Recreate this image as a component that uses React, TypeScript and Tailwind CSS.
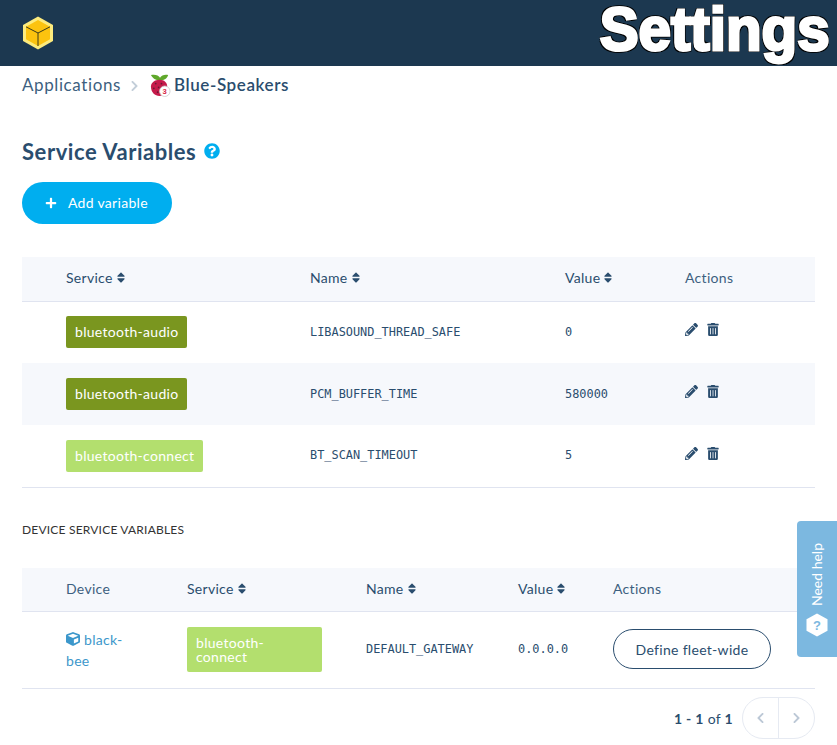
import { FaPencilAlt, FaTrashAlt, FaSort, FaCube, FaQuestionCircle, FaPlus, FaChevronLeft, FaChevronRight } from 'react-icons/fa';

const vars = [
  { service: 'bluetooth-audio', color: 'bg-[#7a961f]', name: 'LIBASOUND_THREAD_SAFE', value: '0' },
  { service: 'bluetooth-audio', color: 'bg-[#7a961f]', name: 'PCM_BUFFER_TIME', value: '580000' },
  { service: 'bluetooth-connect', color: 'bg-[#b3df6e]', name: 'BT_SCAN_TIMEOUT', value: '5' },
];

function Logo() {
  return (
    <svg width="32" height="34" viewBox="0 0 32 34">
      <path d="M16 0.5 L31 9 V25 L16 33.5 L1 25 V9 Z" fill="#fdeb7d" />
      <path d="M16 4 L28 10.8 V23.2 L16 30 L4 23.2 V10.8 Z" fill="#fcc30f" />
      <path d="M4 10.8 L16 17 L28 10.8 M16 17 V30" fill="none" stroke="#3b3a1a" strokeWidth="1" />
    </svg>
  );
}

function Raspberry() {
  return (
    <svg width="21" height="23" viewBox="0 0 22 24">
      <path d="M10 7 C6 6 3 5 1 1 C5 0 9 1 10.5 4 C12 1 16 0 19 1 C18 5 15 6 11 7 Z" fill="#5fa82b" />
      <path d="M10 6 C15 6 18 9 18 13 C18 19 14 23 10 23 C5 23 1 19 1 13 C1 9 5 6 10 6 Z" fill="#c51a4a" />
      <g fill="#2a1a25" opacity="0.6">
        <circle cx="6" cy="10" r="0.9" />
        <circle cx="12" cy="10" r="0.9" />
        <circle cx="9" cy="14" r="0.9" />
        <circle cx="4" cy="15" r="0.9" />
        <circle cx="8" cy="19" r="0.9" />
      </g>
      <circle cx="15.5" cy="18" r="5.5" fill="#fff" stroke="#c9c9c9" strokeWidth="0.8" />
      <text x="15.5" y="21" textAnchor="middle" fontSize="8" fontWeight="700" fill="#d81f45" fontFamily="'Liberation Sans', sans-serif">3</text>
    </svg>
  );
}

function SortHead({ label }: { label: string }) {
  return (
    <span className="flex items-center gap-[3px]">
      {label}
      <FaSort className="w-[10px] h-[13px] text-[#2a4d6e]" />
    </span>
  );
}

export default function App() {
  return (
    <div className="relative w-[837px] h-[745px] overflow-hidden bg-white text-[#2a4d6e] tracking-[0.3px] font-['Lato','Noto_Sans',sans-serif]">
      {/* Header */}
      <header className="h-[66px] bg-[#1c3850] flex items-center justify-between pl-[22px] pr-[7px] overflow-hidden">
        <Logo />
        <span className="origin-right scale-x-[0.94] mb-[8px] font-['Liberation_Sans',sans-serif] font-bold text-[62px] leading-[58px] tracking-[0px] text-white whitespace-nowrap [-webkit-text-stroke:3px_#fff] [text-shadow:2px_0_0_#000,-2px_0_0_#000,0_2px_0_#000,0_-2px_0_#000,2px_2px_0_#000,-2px_-2px_0_#000,2px_-2px_0_#000,-2px_2px_0_#000]">
          Settings
        </span>
      </header>

      <main className="px-[22px]">
        {/* Breadcrumb */}
        <div className="h-[38px] flex items-center text-[17px] tracking-[0.6px]">
          <span className="text-[#3d5f7f]">Applications</span>
          <FaChevronRight className="w-[9px] h-[12px] ml-[9px] mr-[11px] mt-[2px] text-[#c3ced9]" />
          <Raspberry />
          <span className="ml-[3px] font-semibold">Blue-Speakers</span>
        </div>

        {/* Title */}
        <div className="mt-[33px] h-[28px] flex items-center gap-[8px]">
          <h1 className="text-[22px] font-bold tracking-[0.55px]">Service Variables</h1>
          <FaQuestionCircle className="w-[16px] h-[16px] text-[#00aeef]" />
        </div>

        <button className="mt-[17px] w-[150px] h-[42px] pb-[1px] rounded-full bg-[#00aeef] text-white text-[14px] flex items-center pl-[23px] gap-[11px]">
          <FaPlus className="w-[12px] h-[12px]" />
          Add variable
        </button>

        {/* Service variables */}
        <table className="mt-[33px] w-[793px] table-fixed border-collapse text-[14px]">
          <colgroup>
            <col className="w-[44px]" />
            <col className="w-[244px]" />
            <col className="w-[255px]" />
            <col className="w-[120px]" />
            <col />
          </colgroup>
          <thead>
            <tr className="h-[44px] bg-[#f6f8fc] border-b border-[#e0e4f0] text-left">
              <th />
              <th className="font-normal pb-[2px]"><SortHead label="Service" /></th>
              <th className="font-normal pb-[2px]"><SortHead label="Name" /></th>
              <th className="font-normal pb-[2px]"><SortHead label="Value" /></th>
              <th className="font-normal pb-[2px] text-[#3d5f7f]">Actions</th>
            </tr>
          </thead>
          <tbody>
            {vars.map((v, i) => (
              <tr key={v.name} className={`h-[62px] ${i === 1 ? 'bg-[#f6f8fc]' : ''} ${i === 2 ? 'border-b border-[#e0e4f0]' : ''}`}>
                <td />
                <td>
                  <span className={`inline-flex items-center h-[32px] pb-[1px] px-[9px] rounded-[2px] text-white ${v.color}`}>{v.service}</span>
                </td>
                <td className="pt-[1px] tracking-normal font-['DejaVu_Sans_Mono',monospace] text-[11.9px]">{v.name}</td>
                <td className="pt-[1px] tracking-normal font-['DejaVu_Sans_Mono',monospace] text-[11.9px]">{v.value}</td>
                <td>
                  <div className="flex items-center gap-[9px] mb-[5px]">
                    <FaPencilAlt className="w-[13px] h-[13px]" />
                    <FaTrashAlt className="w-[12px] h-[13px]" />
                  </div>
                </td>
              </tr>
            ))}
          </tbody>
        </table>

        <h2 className="mt-[34px] h-[16px] flex items-center text-[12px] text-[#333] tracking-[0.2px]">DEVICE SERVICE VARIABLES</h2>

        {/* Device service variables */}
        <table className="mt-[30px] w-[793px] table-fixed border-collapse text-[14px]">
          <colgroup>
            <col className="w-[44px]" />
            <col className="w-[121px]" />
            <col className="w-[179px]" />
            <col className="w-[152px]" />
            <col className="w-[95px]" />
            <col />
          </colgroup>
          <thead>
            <tr className="h-[44px] bg-[#f6f8fc] border-b border-[#e0e4f0] text-left">
              <th />
              <th className="font-normal pb-[2px] text-[#3d5f7f]">Device</th>
              <th className="font-normal pb-[2px]"><SortHead label="Service" /></th>
              <th className="font-normal pb-[2px]"><SortHead label="Name" /></th>
              <th className="font-normal pb-[2px]"><SortHead label="Value" /></th>
              <th className="font-normal pb-[2px] text-[#3d5f7f]">Actions</th>
            </tr>
          </thead>
          <tbody>
            <tr className="h-[77px] border-b border-[#e0e4f0]">
              <td />
              <td className="pr-[52px] pb-[1px] text-[#3c97cb] leading-[21px]">
                <FaCube className="inline w-[14px] h-[14px] mr-[4px] mb-[3px]" />
                black-bee
              </td>
              <td className="pb-[1px]">
                <span className="flex items-center w-[135px] h-[45px] px-[9px] rounded-[2px] bg-[#b3df6e] text-white leading-[14px]">bluetooth-connect</span>
              </td>
              <td className="tracking-normal font-['DejaVu_Sans_Mono',monospace] text-[11.9px]">DEFAULT_GATEWAY</td>
              <td className="tracking-normal font-['DejaVu_Sans_Mono',monospace] text-[11.9px]">0.0.0.0</td>
              <td>
                <button className="block w-[158px] h-[40px] mb-[2px] rounded-full border border-[#2a4d6e] bg-white text-[14px]">Define fleet-wide</button>
              </td>
            </tr>
          </tbody>
        </table>

        {/* Pagination */}
        <div className="mt-[8px] w-[793px] flex items-center justify-end text-[14px]">
          <span className="mr-[9px]"><b>1 - 1</b> of <b>1</b></span>
          <div className="flex w-[73px] h-[42px] rounded-full border border-[#e6eaf2]">
            <span className="flex-1 flex items-center justify-center border-r border-[#e6eaf2]">
              <FaChevronLeft className="w-[9px] h-[12px] text-[#bcc8d6]" />
            </span>
            <span className="flex-1 flex items-center justify-center">
              <FaChevronRight className="w-[9px] h-[12px] text-[#bcc8d6]" />
            </span>
          </div>
        </div>
      </main>

      {/* Need help tab */}
      <div className="absolute left-[797px] top-[521px] w-[40px] h-[136px] rounded-l-[4px] bg-[#7cb8e0] flex flex-col items-center justify-end pb-[20px] gap-[7px] text-white">
        <span className="[writing-mode:vertical-rl] rotate-180 text-[14px] leading-[16px] tracking-normal whitespace-nowrap">Need help</span>
        <svg width="22" height="24" viewBox="0 0 22 24">
          <path d="M11 0.5 L21.5 6.2 V17.8 L11 23.5 L0.5 17.8 V6.2 Z" fill="#fff" />
          <text x="11" y="16.5" textAnchor="middle" fontSize="13" fontWeight="700" fill="#7cb8e0" fontFamily="'Liberation Sans', sans-serif">?</text>
        </svg>
      </div>
    </div>
  );
}
